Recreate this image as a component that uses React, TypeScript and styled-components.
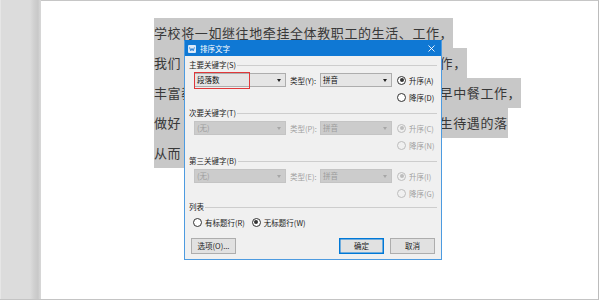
import React from "react"
import styled, { createGlobalStyle } from "styled-components"

const GlobalStyle = createGlobalStyle`
  html, body {
    margin: 0;
    padding: 0;
    background: #ffffff;
  }
  * {
    box-sizing: border-box;
  }
`

const CHAR = 13.6

const Screen = styled.div`
  position: relative;
  display: flex;
  width: 600px;
  height: 301px;
  overflow: hidden;
  background: #ffffff;
`

const Gutter = styled.div`
  width: 41px;
  height: 300px;
  border-bottom: 1px solid #c4c4c4;
  background: linear-gradient(
    to right,
    #e6e6e6 0,
    #e6e6e6 1px,
    #dcdcdc 1px,
    #dcdcdc 30px,
    #d0d0d0 34px,
    #c8c8c8 38px,
    #d6d6d6 40px
  );
`

const Page = styled.div`
  width: 558px;
  height: 300px;
  background: #ffffff;
  border-top: 1px solid #c6c6c6;
  border-right: 1px solid #bcbcbc;
  border-bottom: 1px solid #c4c4c4;
  padding: 17px 0 0 113px;
  font-family: "Noto Sans CJK SC", "Liberation Serif", serif;
  font-size: 13px;
  letter-spacing: 0.6px;
  color: #383838;
`

const Line = styled.div`
  width: fit-content;
  height: 30px;
  padding-top: 8px;
  line-height: 14px;
  background: #c8c8c8;
  white-space: nowrap;
`

// room taken by characters that sit under the dialog
const Covered = styled.span<{ $chars: number }>`
  display: inline-block;
  width: ${(p) => p.$chars * CHAR}px;
  height: 1px;
`

const Dialog = styled.div`
  position: absolute;
  left: 184px;
  top: 40px;
  width: 258px;
  height: 220px;
  border: 1px solid #4d9be0;
  border-top-color: #0f78d4;
  background: #f0f0f0;
  font-family: "Noto Sans CJK SC", "Liberation Sans", sans-serif;
  font-size: 7.5px;
  color: #1a1a1a;
  display: flex;
  flex-direction: column;
`

const TitleBar = styled.div`
  height: 15px;
  background: #0f78d4;
  display: flex;
  align-items: center;
  padding: 0 6px 0 3px;
  color: #ffffff;
  gap: 4px;
`

const TitleText = styled.span`
  flex: 1;
  font-size: 7.5px;
  line-height: 15px;
`

const Body = styled.div`
  flex: 1;
  padding: 4px 4px 5px 4px;
  display: flex;
  flex-direction: column;
`

const GroupLabel = styled.div<{ $gap: number }>`
  display: flex;
  align-items: center;
  height: 10px;
  line-height: 10px;
  margin-top: ${(p) => p.$gap}px;
  white-space: nowrap;

  &::after {
    content: "";
    flex: 1;
    height: 0;
    margin-left: 1px;
    border-top: 1px solid #cdcdcd;
  }
`

const KeyGrid = styled.div`
  display: grid;
  grid-template-columns: 92px 34px 72px 1fr;
  grid-auto-rows: 16px;
  row-gap: 1px;
  margin-top: 2px;
  padding-left: 5px;
  align-items: center;
`

const Combo = styled.div<{ $disabled?: boolean }>`
  position: relative;
  height: 14px;
  line-height: 12px;
  padding-left: 2px;
  border: 1px solid ${(p) => (p.$disabled ? "#c4c4c4" : "#adadad")};
  background: ${(p) => (p.$disabled ? "#cccccc" : "#e5e5e5")};
  color: ${(p) => (p.$disabled ? "#9d9d9d" : "#111111")};
  white-space: nowrap;

  &::after {
    content: "";
    position: absolute;
    right: 4px;
    top: 5px;
    border-left: 2.5px solid transparent;
    border-right: 2.5px solid transparent;
    border-top: 3px solid ${(p) => (p.$disabled ? "#a6a6a6" : "#222222")};
  }
`

const RedMark = styled.div`
  position: absolute;
  left: -1px;
  top: -2px;
  width: 56px;
  height: 17px;
  border: 1.5px solid #e0383a;
`

const TypeLabel = styled.span<{ $disabled?: boolean }>`
  padding-left: 4px;
  white-space: nowrap;
  color: ${(p) => (p.$disabled ? "#a0a0a0" : "#1a1a1a")};
`

const RadioItem = styled.label<{ $disabled?: boolean; $col?: number }>`
  display: flex;
  align-items: center;
  gap: 3px;
  white-space: nowrap;
  grid-column: ${(p) => p.$col ?? "auto"};
  color: ${(p) => (p.$disabled ? "#a0a0a0" : "#1a1a1a")};
`

const GridRadio = styled(RadioItem)`
  margin-left: 5px;
`

const Circle = styled.span<{ $checked?: boolean; $disabled?: boolean }>`
  width: 9px;
  height: 9px;
  border-radius: 50%;
  border: 1px solid ${(p) => (p.$disabled ? "#bdbdbd" : "#333333")};
  background: ${(p) => (p.$disabled ? "#f0f0f0" : "#ffffff")};
  display: flex;
  align-items: center;
  justify-content: center;
  flex-shrink: 0;

  &::after {
    content: "";
    display: ${(p) => (p.$checked ? "block" : "none")};
    width: 4px;
    height: 4px;
    border-radius: 50%;
    background: ${(p) => (p.$disabled ? "#bdbdbd" : "#333333")};
  }
`

const ListRow = styled.div`
  display: flex;
  align-items: center;
  height: 16px;
  margin-top: 2px;
  padding-left: 4px;
  gap: 7px;
`

const ButtonRow = styled.div`
  display: flex;
  align-items: center;
  margin-top: 8px;
  padding: 0 2px;
  gap: 6px;
`

const Button = styled.div<{ $primary?: boolean }>`
  width: 45px;
  height: 16px;
  line-height: 14px;
  text-align: center;
  background: #e1e1e1;
  border: 1px solid ${(p) => (p.$primary ? "#0078d7" : "#adadad")};
  box-shadow: ${(p) => (p.$primary ? "inset 0 0 0 0.5px #0078d7" : "none")};
  white-space: nowrap;
`

const Spacer = styled.div`
  flex: 1;
`

const AppIcon = () => (
  <svg width="8" height="8" viewBox="0 0 8 8">
    <rect x="0" y="0" width="8" height="8" rx="1" fill="#dbe9f8" />
    <path d="M1.6 2.4 L2.8 5.8 L4 3.4 L5.2 5.8 L6.4 2.4" fill="none" stroke="#1877d2" strokeWidth="0.9" strokeLinejoin="round" />
  </svg>
)

const CloseIcon = () => (
  <svg width="7" height="7" viewBox="0 0 7 7">
    <path d="M0.5 0.5 L6.5 6.5 M6.5 0.5 L0.5 6.5" stroke="#ffffff" strokeWidth="0.9" />
  </svg>
)

type Radio = { label: string; checked?: boolean; disabled?: boolean }

type KeyGroup = {
  title: string
  gap: number
  key: string
  typeLabel: string
  disabled: boolean
  marked?: boolean
  up: Radio
  down: Radio
}

const groups: KeyGroup[] = [
  {
    title: "主要关键字(S)",
    gap: 0,
    key: "段落数",
    typeLabel: "类型(Y):",
    disabled: false,
    marked: true,
    up: { label: "升序(A)", checked: true },
    down: { label: "降序(D)" },
  },
  {
    title: "次要关键字(T)",
    gap: 3,
    key: "(无)",
    typeLabel: "类型(P):",
    disabled: true,
    up: { label: "升序(C)", checked: true, disabled: true },
    down: { label: "降序(N)", disabled: true },
  },
  {
    title: "第三关键字(B)",
    gap: 3,
    key: "(无)",
    typeLabel: "类型(E):",
    disabled: true,
    up: { label: "升序(I)", checked: true, disabled: true },
    down: { label: "降序(G)", disabled: true },
  },
]

// highlighted document lines: text left of the dialog, characters hidden under it, text right of it
const lines: { head: string; covered: number; tail: string }[] = [
  { head: "学校将一如继往地牵挂全体教职工的生活、工作，", covered: 0, tail: "" },
  { head: "我们", covered: 19, tail: "作，" },
  { head: "丰富教", covered: 18, tail: "早中餐工作，" },
  { head: "做好", covered: 19, tail: "生待遇的落" },
  { head: "从而", covered: 16, tail: "" },
]

export default function App() {
  return (
    <>
      <GlobalStyle />
      <Screen>
        <Gutter />
        <Page>
          {lines.map((l) => (
            <Line key={l.head}>
              {l.head}
              {l.covered > 0 && <Covered $chars={l.covered} />}
              {l.tail}
            </Line>
          ))}
        </Page>

        <Dialog>
          <TitleBar>
            <AppIcon />
            <TitleText>排序文字</TitleText>
            <CloseIcon />
          </TitleBar>
          <Body>
            {groups.map((g) => (
              <React.Fragment key={g.title}>
                <GroupLabel $gap={g.gap}>{g.title}</GroupLabel>
                <KeyGrid>
                  <Combo $disabled={g.disabled}>
                    {g.key}
                    {g.marked && <RedMark />}
                  </Combo>
                  <TypeLabel $disabled={g.disabled}>{g.typeLabel}</TypeLabel>
                  <Combo $disabled={g.disabled}>拼音</Combo>
                  <GridRadio $disabled={g.up.disabled}>
                    <Circle $checked={g.up.checked} $disabled={g.up.disabled} />
                    {g.up.label}
                  </GridRadio>
                  <GridRadio $col={4} $disabled={g.down.disabled}>
                    <Circle $checked={g.down.checked} $disabled={g.down.disabled} />
                    {g.down.label}
                  </GridRadio>
                </KeyGrid>
              </React.Fragment>
            ))}

            <GroupLabel $gap={1}>列表</GroupLabel>
            <ListRow>
              <RadioItem>
                <Circle />
                有标题行(R)
              </RadioItem>
              <RadioItem>
                <Circle $checked />
                无标题行(W)
              </RadioItem>
            </ListRow>

            <ButtonRow>
              <Button>选项(O)...</Button>
              <Spacer />
              <Button $primary>确定</Button>
              <Button>取消</Button>
            </ButtonRow>
          </Body>
        </Dialog>
      </Screen>
    </>
  )
}
